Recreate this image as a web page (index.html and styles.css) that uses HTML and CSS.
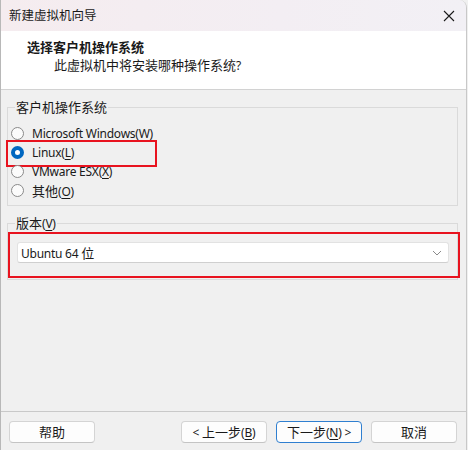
FILE: index.html
```html
<!DOCTYPE html>
<html lang="zh-CN">
<head>
<meta charset="utf-8">
<link rel="stylesheet" href="styles.css">
</head>
<body>
<div class="window">
  <div class="titlebar">
    <span class="title">新建虚拟机向导</span>
    <svg class="close" width="12" height="12" viewBox="0 0 12 12"><path d="M1 1L11 11M11 1L1 11" stroke="#1a1a1a" stroke-width="1.1" fill="none"/></svg>
  </div>
  <div class="header">
    <div class="h-title">选择客户机操作系统</div>
    <div class="h-sub">此虚拟机中将安装哪种操作系统<span class="en">?</span></div>
  </div>
  <div class="body">
    <fieldset class="group group-os">
      <legend>客户机操作系统</legend>
      <div class="radio-row"><span class="radio"></span><span class="en">Microsoft Windows(W)</span></div>
      <div class="radio-row hl"><span class="radio checked"></span><span class="en">Linux(<u>L</u>)</span></div>
      <div class="radio-row"><span class="radio"></span><span class="en">VMware ESX(<u>X</u>)</span></div>
      <div class="radio-row"><span class="radio"></span><span>其他<span class="en">(<u>O</u>)</span></span></div>
    </fieldset>
    <fieldset class="group group-ver">
      <legend>版本<span class="en">(<u>V</u>)</span></legend>
      <div class="combo-wrap">
        <div class="combo">
          <span><span class="en">Ubuntu 64 </span>位</span>
          <svg width="10" height="6" viewBox="0 0 10 6"><path d="M1 1L5 5L9 1" stroke="#8a8a8a" stroke-width="1" fill="none"/></svg>
        </div>
      </div>
    </fieldset>
  </div>
  <div class="footer">
    <button class="btn">帮助</button>
    <div class="spacer"></div>
    <button class="btn"><span class="en">&lt; </span>上一步<span class="en">(<u>B</u>)</span></button>
    <button class="btn primary">下一步<span class="en">(<u>N</u>) &gt;</span></button>
    <button class="btn">取消</button>
  </div>
</div>
</body>
</html>
```
FILE: styles.css
```css
* { box-sizing: border-box; }
html, body { margin: 0; padding: 0; background: #f0f0f0; }
body {
  font-family: "Noto Sans", "Noto Sans CJK SC", sans-serif;
  font-size: 13px;
  color: #1a1a1a;
}
.en { font-size: 12px; letter-spacing: -0.25px; }
.window {
  width: 467px;
  height: 450px;
  display: flex;
  flex-direction: column;
  background: #f0f0f0;
  border-left: 1px solid #b8b8b8;
  border-right: 1px solid #c8c8c8;
  border-top-right-radius: 8px;
  overflow: hidden;
}
.titlebar {
  height: 31px;
  flex: none;
  display: flex;
  align-items: center;
  justify-content: space-between;
  padding: 0 11px 0 8px;
  background: linear-gradient(90deg, #f5ecef 0%, #f3eef3 60%, #f2f0f5 100%);
}
.title { font-size: 12.5px; line-height: 17px; }
.close { display: block; }
.header {
  height: 59px;
  flex: none;
  background: #ffffff;
  border-bottom: 1px solid #d2d2d2;
  padding: 7px 0 0 26px;
}
.h-title { font-weight: bold; line-height: 18px; }
.h-sub { padding-left: 27px; line-height: 18px; }
.body {
  flex: 1;
  padding: 9px 8px 0 6px;
  display: flex;
  flex-direction: column;
}
.group {
  margin: 0;
  border: 1px solid #dadada;
  padding: 0 3px 0 3px;
  min-width: 0;
}
.group legend {
  padding: 0 1px;
  margin-left: 4px;
  line-height: 17px;
  color: #1a1a1a;
}
.group-os { padding-top: 8px; padding-bottom: 5px; }
.radio-row {
  height: 19px;
  display: flex;
  align-items: center;
  gap: 8px;
  position: relative;
}
.radio {
  width: 13px;
  height: 13px;
  border-radius: 50%;
  border: 1px solid #8a8a8a;
  background: #fbfbfb;
  flex: none;
}
.radio.checked {
  border: 4px solid #0067c0;
  background: #ffffff;
}
.hl::after {
  content: "";
  position: absolute;
  left: -5px;
  top: -3px;
  width: 147px;
  height: 23px;
  border: 2px solid #e8131f;
}
.group-ver { margin-top: 9px; padding: 0; height: 65px; }
.group-ver legend { margin-left: 7px; }
.combo-wrap {
  margin: 0 -3px 0 0;
  padding: 8px 9px 13px 7px;
  border: 2px solid #e8131f;
}
.combo {
  height: 21px;
  background: #ffffff;
  border: 1px solid #e2e2e2;
  border-bottom-color: #cfcfcf;
  border-radius: 3px;
  display: flex;
  align-items: center;
  justify-content: space-between;
  padding: 0 6px 0 3px;
}
.footer {
  flex: none;
  height: 39px;
  border-top: 1px solid #c9c9c9;
  display: flex;
  align-items: flex-start;
  padding: 9px 9px 0 8px;
  gap: 9px;
}
.spacer { flex: 1; }
.btn {
  width: 86px;
  height: 22px;
  font-family: inherit;
  font-size: 13px;
  color: #1a1a1a;
  background: #fdfdfd;
  border: 1px solid #d4d4d4;
  border-bottom-color: #c4c4c4;
  border-radius: 4px;
  padding: 0;
  line-height: 18px;
}
.btn.primary { border: 1px solid #2f7fd0; }
u { text-decoration-thickness: 1px; text-underline-offset: 2px; }
```
